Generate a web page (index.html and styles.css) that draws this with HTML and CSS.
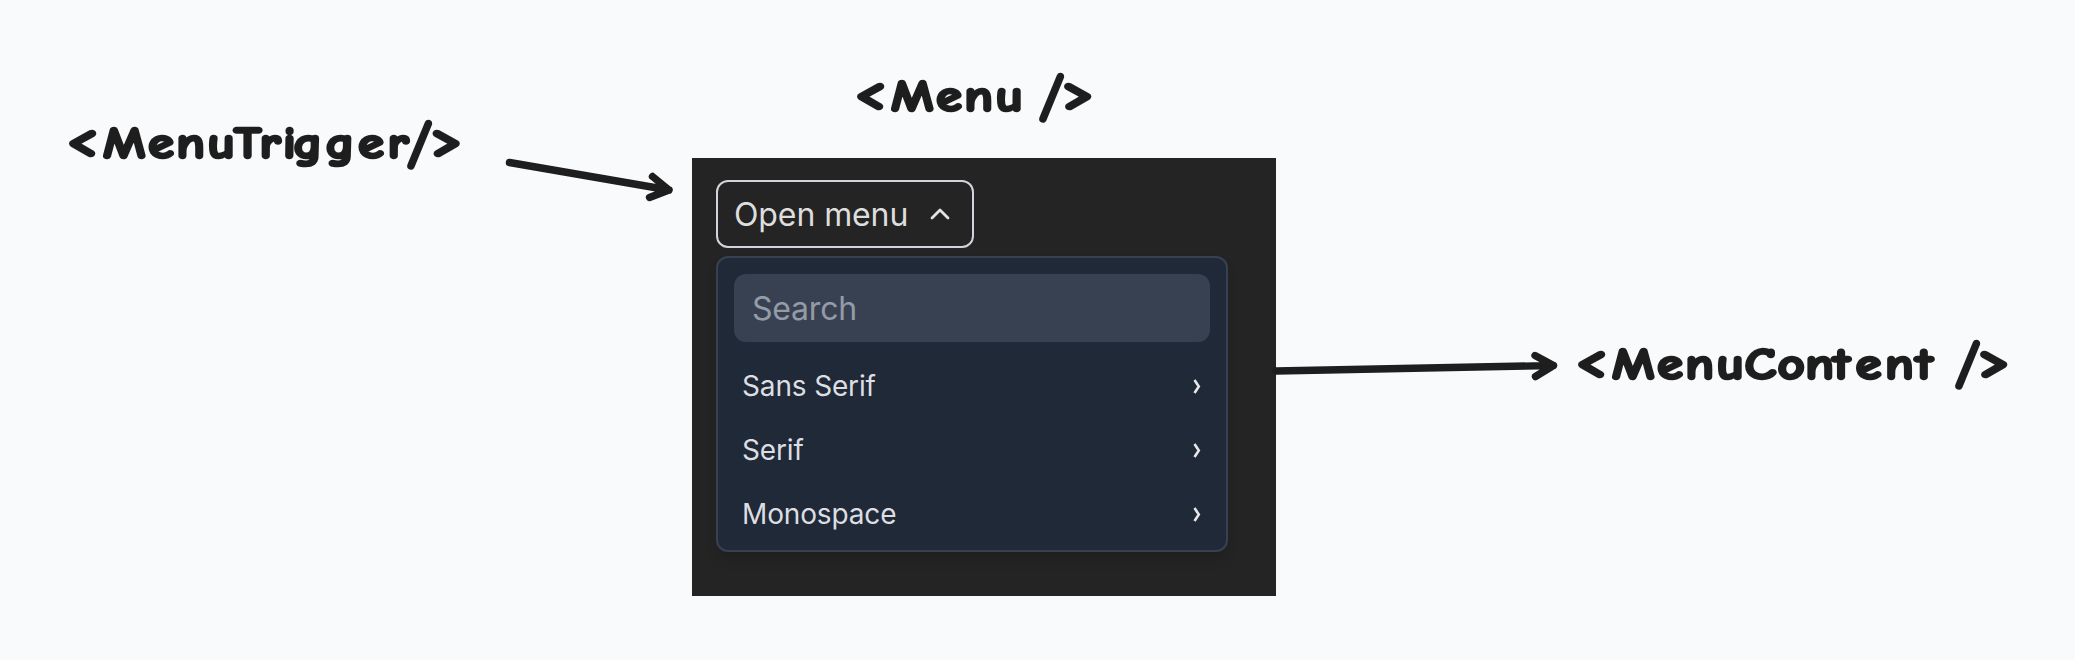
FILE: index.html
```
<!DOCTYPE html>
<html lang="en">
<head>
<meta charset="utf-8">
<title>Menu anatomy</title>
<link rel="stylesheet" href="styles.css">
</head>
<body>
<main class="canvas">
  <section class="panel">
    <button class="trigger"><span class="trigger-label">Open menu</span>
      <svg class="chevron" width="20" height="12" viewBox="0 0 20 12"><path d="M2 10 10 2l8 8"/></svg>
    </button>
    <div class="menu">
      <input class="search" type="text" placeholder="Search">
      <ul class="items">
        <li class="item"><span>Sans Serif</span><svg class="caret" width="8" height="15" viewBox="0 0 8 15"><path d="M1.500 1 5.800 7.500 1.500 14"/></svg></li>
        <li class="item"><span>Serif</span><svg class="caret" width="8" height="15" viewBox="0 0 8 15"><path d="M1.500 1 5.800 7.500 1.500 14"/></svg></li>
        <li class="item"><span>Monospace</span><svg class="caret" width="8" height="15" viewBox="0 0 8 15"><path d="M1.500 1 5.800 7.500 1.500 14"/></svg></li>
      </ul>
    </div>
  </section>
  <svg class="notes" width="2075" height="660" viewBox="0 0 2075 660">
    <g class="label">
      <text transform="translate(67 158) scale(1.200 1)" x="-1 30 67.500 91 117 139 160.500 180 188.500 215.500 242.500 267"><tspan class="angle" dy="-2">&lt;</tspan><tspan dy="2">MenuTrigger</tspan></text>
      <text class="slash" x="407" y="159.500">/</text>
      <text class="angle" transform="translate(430.500 156) scale(1.200 1)">&gt;</text>
      <text transform="translate(855 111) scale(1.200 1)" x="-1 30 67.500 91 117"><tspan class="angle" dy="-2">&lt;</tspan><tspan dy="2">Menu</tspan></text>
      <text class="slash" x="1039" y="112.500">/</text>
      <text class="angle" transform="translate(1062 109) scale(1.200 1)">&gt;</text>
      <text transform="translate(1576 378.500) scale(1.200 1)" x="-1 30 67.500 91 117 140.500 168 191 214 233 257.500 283"><tspan class="angle" dy="-2">&lt;</tspan><tspan dy="2">MenuContent</tspan></text>
      <text class="slash" x="1955" y="380">/</text>
      <text class="angle" transform="translate(1978 376.500) scale(1.200 1)">&gt;</text>
    </g>
    <g class="arrow">
      <path d="M509.500 162.500 669 190M652.500 176.500 669 190 649.500 197.500"/>
      <path d="M1276 371 1553.500 365.500M1535 355.500 1553.500 365.500 1535.500 376.500"/>
    </g>
  </svg>
</main>
</body>
</html>
```
FILE: styles.css
```
* { box-sizing: border-box; }
body { margin: 0; background: #f9fafc; font-family: Inter, "Liberation Sans", sans-serif; }
.canvas { position: relative; width: 2075px; height: 660px; overflow: hidden; }
.panel {
  position: absolute; left: 692px; top: 158px; width: 584px; height: 438px;
  padding: 22px 24px; background: #242424;
  display: flex; flex-direction: column; align-items: flex-start; gap: 8px;
}
.trigger {
  width: 258px; height: 68px; padding: 0 22px 0 16px;
  display: flex; align-items: center; justify-content: space-between;
  border: 2px solid #d1d5db; border-radius: 12px; background: transparent;
  color: #dedede; font: 400 32px Inter, sans-serif; letter-spacing: -.1px;
}
.chevron path { fill: none; stroke: #e3e3e3; stroke-width: 2.8; stroke-linecap: round; stroke-linejoin: round; }
.menu {
  width: 512px; height: 296px; padding: 16px;
  border: 2px solid #374151; border-radius: 12px; background: #1f2937;
  box-shadow: 0 8px 12px rgba(0, 0, 0, .12);
}
.search {
  display: block; width: 476px; height: 68px; padding: 0 18px;
  border: 0; border-radius: 12px; background: #384151;
  font: 400 32px Inter, sans-serif; letter-spacing: -.2px;
}
.search::placeholder { color: #949ba7; opacity: 1; }
.items { list-style: none; margin: 12px 0 0; padding: 0; }
.item {
  height: 64px; padding: 0 9px 0 8px;
  display: flex; align-items: center; justify-content: space-between;
  color: #dcdee2; font-size: 28px; letter-spacing: -.15px;
}
.caret path { fill: none; stroke: #e5e7eb; stroke-width: 2.6; }
.notes { position: absolute; left: 0; top: 0; pointer-events: none; }
.label {
  font-family: "Comic Neue", "Comic Sans MS", cursive; font-weight: 700; font-size: 44px;
  fill: #1e1e1e; stroke: #1e1e1e; stroke-width: 2.6; stroke-linejoin: round;
}
.angle { font-size: 50px; }
.slash { font-size: 58px; }
.arrow { fill: none; stroke: #1e1e1e; stroke-width: 7.4; stroke-linecap: round; stroke-linejoin: round; }
```
